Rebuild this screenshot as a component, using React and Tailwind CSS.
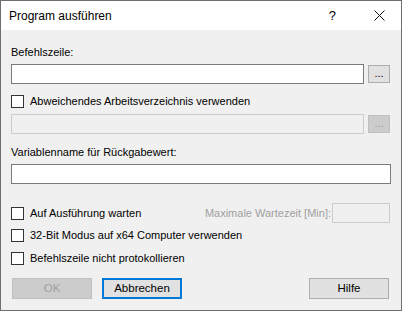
import React from 'react';

const FONT = { fontFamily: '"Liberation Sans", Arial, sans-serif' };

function Checkbox({ label, className = "" }) {
  return (
    <label className={`flex items-center h-[13px] ${className}`}>
      <span className="w-[13px] h-[13px] border border-[#333333] bg-white shrink-0" />
      <span className="ml-[6px] text-[11px] leading-[15px] text-black whitespace-nowrap">{label}</span>
    </label>
  );
}

function Browse({ disabled }) {
  return (
    <button
      className={`w-[22px] h-[18px] border text-[11px] leading-[10px] flex items-end justify-center pb-[4px] ${
        disabled ? "bg-[#cccccc] border-[#bfbfbf] text-[#a0a0a0]" : "bg-[#e1e1e1] border-[#adadad] text-black"
      }`}
    >
      ...
    </button>
  );
}

function Button({ children, variant }) {
  const styles = {
    disabled: "bg-[#cccccc] border border-[#bfbfbf] text-[#a0a0a0]",
    focus: "bg-[#e1e1e1] border-2 border-[#0078d7] text-black",
    normal: "bg-[#e1e1e1] border border-[#adadad] text-black",
  };
  return (
    <button className={`w-[80px] h-[21px] text-[11.5px] leading-[15px] flex items-center justify-center ${styles[variant]}`}>
      {children}
    </button>
  );
}

export default function App() {
  return (
    <div className="w-[403px] h-[312px] bg-white" style={FONT}>
      <div className="w-[402px] h-[311px] border border-[#6e6e6e] flex flex-col">
        {/* Title bar */}
        <div className="h-[29px] bg-white flex items-center shrink-0">
          <span className="ml-[8px] text-[12px] text-black">Program ausführen</span>
          <span className="ml-auto mr-[38px] text-[13px] text-black">?</span>
          <svg width="11" height="11" viewBox="0 0 11 11" className="mr-[16px]">
            <path d="M0.5 0.5L10.5 10.5M10.5 0.5L0.5 10.5" stroke="#111" strokeWidth="1" />
          </svg>
        </div>

        {/* Content */}
        <div className="flex-1 bg-[#f0f0f0] pl-[10px] pr-[11px] flex flex-col">
          <div className="mt-[15px] text-[11px] leading-[15px] text-black">Befehlszeile:</div>
          <div className="mt-[4px] flex items-center">
            <div className="w-[353px] h-[20px] bg-white border border-[#7a7a7a]" />
            <div className="ml-[4px]"><Browse /></div>
          </div>

          <Checkbox label="Abweichendes Arbeitsverzeichnis verwenden" className="mt-[11px]" />
          <div className="mt-[6px] flex items-center">
            <div className="w-[353px] h-[20px] bg-[#f0f0f0] border border-[#cccccc]" />
            <div className="ml-[4px]"><Browse disabled /></div>
          </div>

          <div className="mt-[11px] text-[11px] leading-[15px] text-black">Variablenname für Rückgabewert:</div>
          <div className="mt-[4px] w-[380px] h-[20px] bg-white border border-[#7a7a7a]" />

          <div className="mt-[19px] h-[20px] flex items-center">
            <Checkbox label="Auf Ausführung warten" />
            <span className="ml-auto text-[11px] leading-[15px] text-[#a0a0a0]">Maximale Wartezeit [Min]:</span>
            <div className="ml-[1px] w-[58px] h-[20px] bg-[#f0f0f0] border border-[#cccccc]" />
          </div>

          <Checkbox label="32-Bit Modus auf x64 Computer verwenden" className="mt-[6px]" />
          <Checkbox label="Befehlszeile nicht protokollieren" className="mt-[10px]" />

          <div className="mt-[13px] flex items-center">
            <div className="ml-[1px]"><Button variant="disabled">OK</Button></div>
            <div className="ml-[10px]"><Button variant="focus">Abbrechen</Button></div>
            <div className="ml-auto mr-[1px]"><Button variant="normal">Hilfe</Button></div>
          </div>
        </div>
      </div>
    </div>
  );
}
